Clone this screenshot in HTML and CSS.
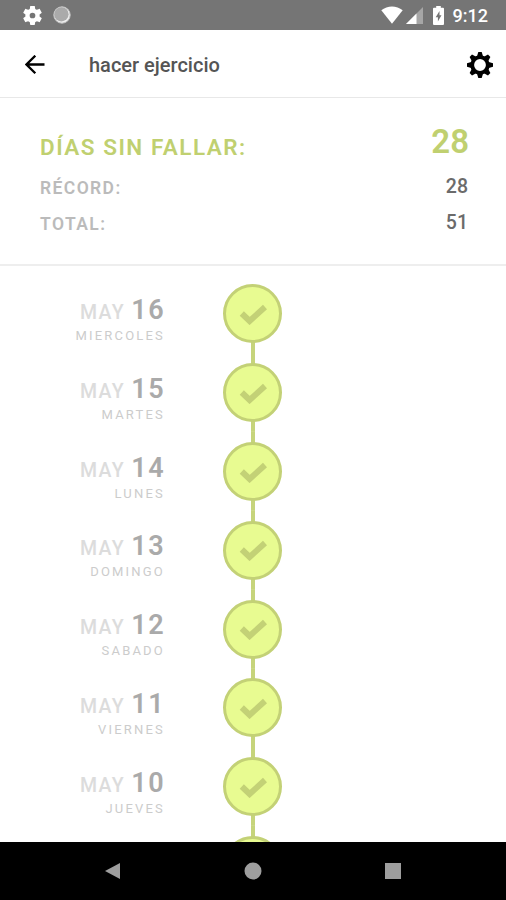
FILE: index.html
```html
<!DOCTYPE html>
<html lang="es">
  <head>
    <meta charset="UTF-8" />
    <meta name="viewport" content="width=device-width, initial-scale=1" />
    <title>hacer ejercicio</title>
    <link rel="stylesheet" href="styles.css">
  </head>
  <body>
    <div class="status-bar">
      <svg class="status-gear" viewBox="2 2 20 20" width="19" height="19">
        <path fill="#fff" d="M19.43 12.98c.04-.32.07-.64.07-.98s-.03-.66-.07-.98l2.11-1.65c.19-.15.24-.42.12-.64l-2-3.46c-.12-.22-.39-.3-.61-.22l-2.49 1c-.52-.4-1.08-.73-1.69-.98l-.38-2.65C14.46 2.18 14.25 2 14 2h-4c-.25 0-.46.18-.49.42l-.38 2.65c-.61.25-1.17.59-1.69.98l-2.49-1c-.23-.09-.49 0-.61.22l-2 3.46c-.13.22-.07.49.12.64l2.11 1.65c-.04.32-.07.65-.07.98s.03.66.07.98l-2.11 1.65c-.19.15-.24.42-.12.64l2 3.46c.12.22.39.3.61.22l2.49-1c.52.4 1.08.73 1.69.98l.38 2.65c.03.24.24.42.49.42h4c.25 0 .46-.18.49-.42l.38-2.65c.61-.25 1.17-.59 1.69-.98l2.49 1c.23.09.49 0 .61-.22l2-3.46c.12-.22.07-.49-.12-.64l-2.11-1.65zM12 15a3 3 0 1 1 0-6 3 3 0 0 1 0 6z" />
      </svg>
      <svg class="status-sync" viewBox="0 0 18 18" width="18" height="18">
        <circle cx="9" cy="9" r="8.2" fill="#eee" />
        <circle cx="8.3" cy="8.2" r="7.3" fill="#aaa" />
        <circle cx="9" cy="9" r="8.2" fill="none" stroke="#c4c4c4" stroke-width="1" />
      </svg>
      <div class="status-right">
        <svg viewBox="0 0 22 18" width="22" height="18">
          <path fill="#fff" d="M11 17.8L0.3 4.2C6.500-.9 15.500-.9 21.700 4.200z" />
        </svg>
        <svg class="signal" viewBox="0 0 17 17" width="17" height="17">
          <path fill="#a6a6a6" d="M17 0v17H0z" />
          <path fill="#fff" d="M10.500 6.500V17H0z" />
        </svg>
        <svg class="battery" viewBox="0 0 11 19" width="11" height="19">
          <path fill="#fff" d="M3.200 0h4.600v1.800H10q1 0 1 1V18q0 1-1 1H1q-1 0-1-1V2.800q0-1 1-1h2.200z" />
          <path fill="#757575" d="M6.500 5L2.700 11.300h2.200V15.500L8.500 9.300H6.500z" />
        </svg>
        <span class="clock">9:12</span>
      </div>
    </div>

    <header class="app-bar">
      <svg class="back" viewBox="0 0 20 20" width="20" height="20">
        <path d="M19.500 9.500H2M10.300.7L1.500 9.500l8.800 8.800" fill="none" stroke="#000" stroke-width="2.300" />
      </svg>
      <h1>hacer ejercicio</h1>
      <svg class="settings" viewBox="-13 -13 26 26" width="26" height="26">
        <g id="teeth">
          <path id="tooth" d="M-3.200-8L-1.700-13H1.700L3.200-8z" />
          <use href="#tooth" transform="rotate(45)" />
          <use href="#tooth" transform="rotate(90)" />
          <use href="#tooth" transform="rotate(135)" />
        </g>
        <use href="#teeth" transform="rotate(180)" />
        <circle r="7.800" fill="none" stroke="#000" stroke-width="3.800" />
      </svg>
    </header>

    <dl class="stats">
      <dt class="streak">DÍAS SIN FALLAR:</dt>
      <dd class="streak">28</dd>
      <dt>RÉCORD:</dt>
      <dd>28</dd>
      <dt>TOTAL:</dt>
      <dd>51</dd>
    </dl>

    <main class="days" id="days"></main>

    <nav class="nav-bar">
      <svg viewBox="0 0 18 18" width="18" height="18"><path d="M16 1v16L1 9z" /></svg>
      <svg viewBox="0 0 18 18" width="18" height="18"><circle cx="9" cy="9" r="8.500" /></svg>
      <svg viewBox="0 0 18 18" width="18" height="18"><path d="M1 1h16v16H1z" /></svg>
    </nav>

    <script>
      const days = [
        { day: 16, name: "MIERCOLES" },
        { day: 15, name: "MARTES" },
        { day: 14, name: "LUNES" },
        { day: 13, name: "DOMINGO" },
        { day: 12, name: "SABADO" },
        { day: 11, name: "VIERNES" },
        { day: 10, name: "JUEVES" },
        {},
      ];

      function renderDate(item) {
        if (!item.day) return "";
        return `
          <div class="month">MAY <b>${item.day}</b></div>
          <div class="weekday">${item.name}</div>
        `;
      }

      document.getElementById("days").innerHTML = days
        .map(
          (item) => `
            <div class="day">
              <div class="date">${renderDate(item)}</div>
              <div class="track">
                <div class="check">
                  <svg viewBox="0 0 28 22" width="28" height="22">
                    <path d="M2.800 10.500L10.600 18L26 4" />
                  </svg>
                </div>
              </div>
            </div>
          `
        )
        .join("");
    </script>
  </body>
</html>
```

FILE: styles.css
```css
* {
  box-sizing: border-box;
}
body {
  margin: 0;
  height: 900px;
  display: flex;
  flex-direction: column;
  overflow: hidden;
  background: #fff;
  font-family: Roboto, sans-serif;
}
svg {
  display: block;
  flex: none;
}

.status-bar {
  flex: none;
  height: 30px;
  padding: 0 18px 0 23px;
  display: flex;
  align-items: center;
  background: #757575;
}
.status-sync {
  margin-left: 11px;
}
.status-right {
  margin-left: auto;
  display: flex;
  align-items: center;
}
.signal {
  margin-left: 3px;
}
.battery {
  margin-left: 10px;
}
.clock {
  margin: 2px 0 0 9px;
  font-size: 18px;
  font-weight: 500;
  line-height: 20px;
  color: #fff;
}

.app-bar {
  flex: none;
  height: 68px;
  padding: 2px 13px 0 25px;
  display: flex;
  align-items: center;
  border-bottom: 1px solid #e8e8e8;
}
.app-bar h1 {
  margin: 0 0 0 44px;
  font-size: 20px;
  font-weight: 500;
  line-height: 24px;
  color: #555;
}
.settings {
  margin-left: auto;
}

.stats {
  flex: none;
  height: 168px;
  margin: 0;
  padding: 29px 38px 0 40px;
  display: grid;
  grid-template-columns: 1fr auto;
  grid-template-rows: 42px 36px 36px;
  border-bottom: 2px solid #eee;
}
.stats dt {
  font-size: 17.5px;
  font-weight: 600;
  line-height: 38px;
  letter-spacing: 1.4px;
  color: #bbb;
}
.stats dd {
  margin: 0;
  font-size: 19.5px;
  font-weight: 500;
  line-height: 36px;
  text-align: right;
  color: #6b6b6b;
}
.stats dt.streak {
  font-size: 22.5px;
  line-height: 40px;
  letter-spacing: 1.5px;
  color: #c0d070;
}
.stats dd.streak {
  margin-right: -1px;
  font-size: 33px;
  font-weight: 600;
  line-height: 29px;
  color: #c0d070;
}

.days {
  flex: 1;
  min-height: 0;
  padding-top: 8.6px;
  overflow: hidden;
}
.day {
  height: 78.8px;
  display: flex;
}
.date {
  width: 165px;
  padding-top: 21.4px;
  text-align: right;
}
.month {
  font-size: 19.5px;
  font-weight: 500;
  line-height: 28px;
  letter-spacing: 1.4px;
  color: #dcdcdc;
}
.month b {
  font-size: 27px;
  font-weight: 600;
  color: #aaa;
}
.weekday {
  font-size: 13px;
  line-height: 18px;
  letter-spacing: 2.2px;
  color: #ccc;
}
.track {
  width: 59px;
  margin-left: 58px;
  display: flex;
  align-items: center;
  background: linear-gradient(#c6d47b, #c6d47b) center / 4px 100% no-repeat;
}
.day:first-child .track {
  background-size: 4px 50%;
  background-position: bottom;
}
.check {
  width: 59px;
  height: 59px;
  display: flex;
  align-items: center;
  justify-content: center;
  border: 3px solid #c3d176;
  border-radius: 50%;
  background: #e8fb91;
}
.check path {
  fill: none;
  stroke: #c3d176;
  stroke-width: 6;
}

.nav-bar {
  flex: none;
  height: 58px;
  padding: 0 104px;
  display: flex;
  align-items: center;
  justify-content: space-between;
  background: #000;
}
.nav-bar svg {
  fill: #9e9e9e;
}
```
